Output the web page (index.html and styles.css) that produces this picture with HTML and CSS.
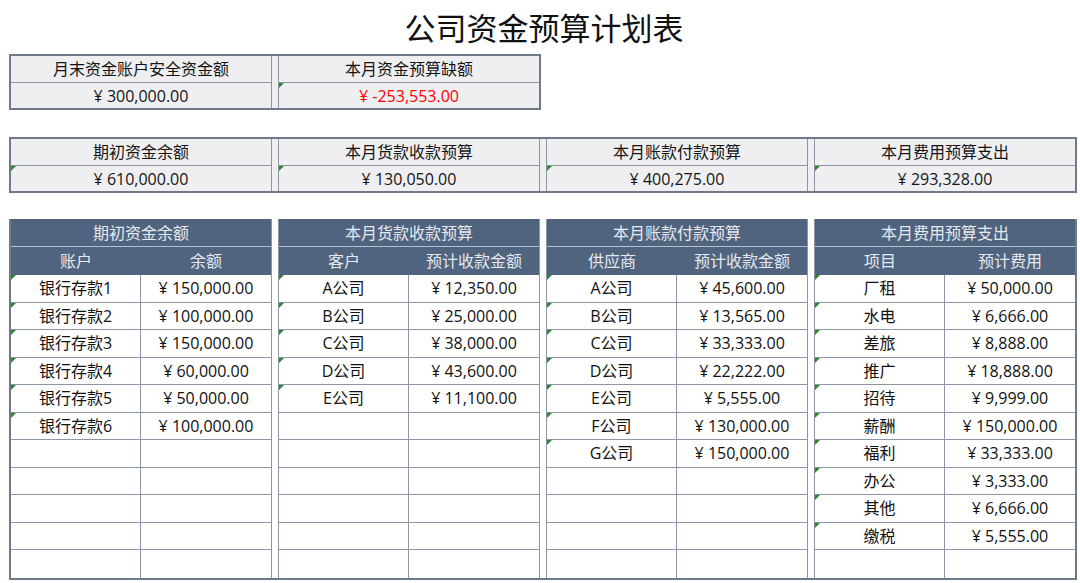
FILE: index.html
```html
<!DOCTYPE html>
<html lang="zh-CN">
<head>
<meta charset="utf-8">
<title>公司资金预算计划表</title>
<link rel="stylesheet" href="styles.css">
</head>
<body>
<h1 class="title">公司资金预算计划表</h1>

<div class="stats">
  <div class="stat">
    <div class="stat-label">月末资金账户安全资金额</div>
    <div class="stat-value">¥ 300,000.00</div>
  </div>
  <div class="stat">
    <div class="stat-label">本月资金预算缺额</div>
    <div class="stat-value mark neg">¥ -253,553.00</div>
  </div>
</div>

<div class="stats">
  <div class="stat">
    <div class="stat-label">期初资金余额</div>
    <div class="stat-value mark">¥ 610,000.00</div>
  </div>
  <div class="stat">
    <div class="stat-label">本月货款收款预算</div>
    <div class="stat-value mark">¥ 130,050.00</div>
  </div>
  <div class="stat">
    <div class="stat-label">本月账款付款预算</div>
    <div class="stat-value mark">¥ 400,275.00</div>
  </div>
  <div class="stat">
    <div class="stat-label">本月费用预算支出</div>
    <div class="stat-value mark">¥ 293,328.00</div>
  </div>
</div>

<div class="tables">
  <div class="tbl">
    <div class="tbl-title">期初资金余额</div>
    <div class="th">账户</div><div class="th">余额</div>
    <div class="td c1 mark">银行存款1</div><div class="td">¥ 150,000.00</div>
    <div class="td c1 mark">银行存款2</div><div class="td">¥ 100,000.00</div>
    <div class="td c1 mark">银行存款3</div><div class="td">¥ 150,000.00</div>
    <div class="td c1 mark">银行存款4</div><div class="td">¥ 60,000.00</div>
    <div class="td c1 mark">银行存款5</div><div class="td">¥ 50,000.00</div>
    <div class="td c1 mark">银行存款6</div><div class="td">¥ 100,000.00</div>
    <div class="td c1"></div><div class="td"></div>
    <div class="td c1"></div><div class="td"></div>
    <div class="td c1"></div><div class="td"></div>
    <div class="td c1"></div><div class="td"></div>
    <div class="td c1"></div><div class="td"></div>
  </div>
  <div class="tbl">
    <div class="tbl-title">本月货款收款预算</div>
    <div class="th">客户</div><div class="th">预计收款金额</div>
    <div class="td c1 mark">A公司</div><div class="td">¥ 12,350.00</div>
    <div class="td c1 mark">B公司</div><div class="td">¥ 25,000.00</div>
    <div class="td c1 mark">C公司</div><div class="td">¥ 38,000.00</div>
    <div class="td c1 mark">D公司</div><div class="td">¥ 43,600.00</div>
    <div class="td c1 mark">E公司</div><div class="td">¥ 11,100.00</div>
    <div class="td c1"></div><div class="td"></div>
    <div class="td c1"></div><div class="td"></div>
    <div class="td c1"></div><div class="td"></div>
    <div class="td c1"></div><div class="td"></div>
    <div class="td c1"></div><div class="td"></div>
    <div class="td c1"></div><div class="td"></div>
  </div>
  <div class="tbl">
    <div class="tbl-title">本月账款付款预算</div>
    <div class="th">供应商</div><div class="th">预计收款金额</div>
    <div class="td c1 mark">A公司</div><div class="td">¥ 45,600.00</div>
    <div class="td c1 mark">B公司</div><div class="td">¥ 13,565.00</div>
    <div class="td c1 mark">C公司</div><div class="td">¥ 33,333.00</div>
    <div class="td c1 mark">D公司</div><div class="td">¥ 22,222.00</div>
    <div class="td c1 mark">E公司</div><div class="td">¥ 5,555.00</div>
    <div class="td c1 mark">F公司</div><div class="td">¥ 130,000.00</div>
    <div class="td c1 mark">G公司</div><div class="td">¥ 150,000.00</div>
    <div class="td c1"></div><div class="td"></div>
    <div class="td c1"></div><div class="td"></div>
    <div class="td c1"></div><div class="td"></div>
    <div class="td c1"></div><div class="td"></div>
  </div>
  <div class="tbl">
    <div class="tbl-title">本月费用预算支出</div>
    <div class="th">项目</div><div class="th">预计费用</div>
    <div class="td c1 mark">厂租</div><div class="td">¥ 50,000.00</div>
    <div class="td c1 mark">水电</div><div class="td">¥ 6,666.00</div>
    <div class="td c1 mark">差旅</div><div class="td">¥ 8,888.00</div>
    <div class="td c1 mark">推广</div><div class="td">¥ 18,888.00</div>
    <div class="td c1 mark">招待</div><div class="td">¥ 9,999.00</div>
    <div class="td c1 mark">薪酬</div><div class="td">¥ 150,000.00</div>
    <div class="td c1 mark">福利</div><div class="td">¥ 33,333.00</div>
    <div class="td c1 mark">办公</div><div class="td">¥ 3,333.00</div>
    <div class="td c1 mark">其他</div><div class="td">¥ 6,666.00</div>
    <div class="td c1 mark">缴税</div><div class="td">¥ 5,555.00</div>
    <div class="td c1"></div><div class="td"></div>
  </div>
</div>
</body>
</html>
```

FILE: styles.css
```css
html, body {
  margin: 0;
  padding: 0;
  background: #ffffff;
}

body {
  width: 1080px;
  font-family: "Open Sans", "Noto Sans CJK SC", sans-serif;
  color: #141414;
  font-size: 16px;
}

.title {
  margin: 0;
  height: 54px;
  padding-left: 8px;
  line-height: 54px;
  text-align: center;
  font-family: "Noto Sans CJK SC", sans-serif;
  font-size: 31px;
  font-weight: 400;
  color: #111;
}

.stats {
  display: flex;
  width: fit-content;
  margin: 0 0 27px 9px;
  border: 2px solid #6f798a;
  background: #efeff2;
}

.stat {
  width: 260px;
  display: flex;
  flex-direction: column;
}

.stat:not(:first-child) {
  margin-left: 6px;
  border-left: 1px solid #8c96a6;
}

.stat:not(:last-child) {
  border-right: 1px solid #8c96a6;
}

.stat-label,
.stat-value {
  display: flex;
  align-items: center;
  justify-content: center;
  box-sizing: border-box;
  line-height: 1;
  white-space: pre;
}

.stat-label {
  height: 27px;
  border-bottom: 1px solid #8c96a6;
}

.stat-value {
  height: 25px;
}

.neg {
  color: #ff0000;
}

.mark {
  position: relative;
}

.mark::before {
  content: "";
  position: absolute;
  left: 0;
  top: 0;
  border-top: 5px solid #2a8a2a;
  border-right: 5px solid transparent;
}

.tables {
  display: flex;
  width: fit-content;
  margin-left: 9px;
  margin-top: -1px;
  border: 2px solid #6f798a;
  border-top: 0;
  background: #ffffff;
}

.tbl {
  width: 260px;
  display: grid;
  grid-template-columns: 130px 130px;
  grid-template-rows: 28px 28px repeat(11, 27.5px);
}

.tbl:not(:first-child) {
  margin-left: 6px;
  border-left: 1px solid #8c96a6;
}

.tbl:not(:last-child) {
  border-right: 1px solid #8c96a6;
}

.tbl-title,
.th,
.td {
  display: flex;
  align-items: center;
  justify-content: center;
  box-sizing: border-box;
  line-height: 1;
  white-space: pre;
}

.tbl-title {
  grid-column: 1 / 3;
  background: #51647f;
  color: #e6eaf0;
  border-bottom: 1px solid #b4bfce;
}

.th {
  background: #51647f;
  color: #e6eaf0;
}

.th:first-of-type {
  border-right: 1px solid #a6b1c1;
}

.td {
  border-bottom: 1px solid #8c96a6;
  color: #111;
}

.td.c1 {
  border-right: 1px solid #8c96a6;
}

.tbl > .td:nth-last-child(-n+2) {
  border-bottom: 0;
}
```
